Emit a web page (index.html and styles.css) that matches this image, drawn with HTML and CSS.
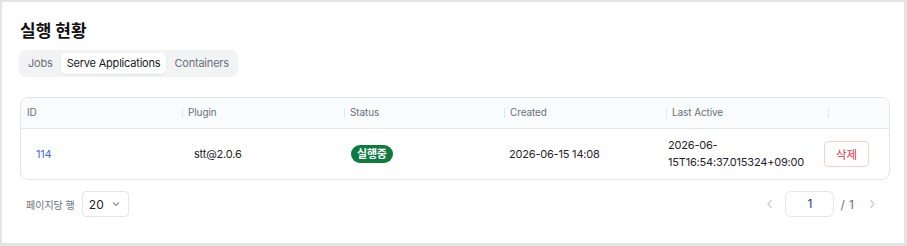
FILE: index.html
```html
<!DOCTYPE html>
<html lang="ko">
<head>
  <meta charset="UTF-8">
  <title>실행 현황</title>
  <link rel="stylesheet" href="styles.css">
</head>
<body>
  <div class="panel">
    <h2>실행 현황</h2>
    <div class="tabs">
      <span class="tab">Jobs</span>
      <span class="tab activo">Serve Applications</span>
      <span class="tab">Containers</span>
    </div>

    <div class="tabla-wrap">
      <table class="tabla">
        <colgroup>
          <col style="width:161px">
          <col style="width:162px">
          <col style="width:160px">
          <col style="width:162px">
          <col style="width:162px">
          <col>
        </colgroup>
        <thead>
          <tr>
            <th>ID</th>
            <th>Plugin</th>
            <th>Status</th>
            <th>Created</th>
            <th>Last Active</th>
            <th></th>
          </tr>
        </thead>
        <tbody>
          <tr>
            <td class="col-id"><a href="#">114</a></td>
            <td class="col-plugin">stt@2.0.6</td>
            <td><span class="badge">실행중</span></td>
            <td class="col-fecha">2026-06-15 14:08</td>
            <td class="col-activo">2026-06-<br>15T16:54:37.015324+09:00</td>
            <td><button type="button" class="btn-borrar">삭제</button></td>
          </tr>
        </tbody>
      </table>
    </div>

    <div class="pie">
      <div class="por-pagina">
        <span>페이지당 행</span>
        <div class="select">
          20
          <svg width="10" height="10" viewBox="0 0 10 10"><path d="M2 3.5 L5 6.5 L8 3.5" fill="none" stroke="#8a9099" stroke-width="1.1"/></svg>
        </div>
      </div>
      <div class="paginacion">
        <svg class="flecha" width="10" height="12" viewBox="0 0 10 12"><path d="M6.5 2 L3 6 L6.5 10" fill="none" stroke="#c8ccd3" stroke-width="1.2"/></svg>
        <div class="pagina">1</div>
        <span class="total">/&nbsp;1</span>
        <svg class="flecha" width="10" height="12" viewBox="0 0 10 12"><path d="M3.5 2 L7 6 L3.5 10" fill="none" stroke="#c8ccd3" stroke-width="1.2"/></svg>
      </div>
    </div>
  </div>
</body>
</html>
```

FILE: styles.css
```css
body {
  margin: 0;
  background: #e4e4e4;
  font-family: Inter, "Noto Sans CJK KR", sans-serif;
  color: #1f2328;
}
.panel {
  background: white;
  margin: 2px 3px 0 2px;
  height: 241px;
  box-sizing: border-box;
  padding: 17px 17px 0 18px;
}
h2 {
  margin: 0 0 7px 0;
  font-size: 17px;
  line-height: 24px;
  font-weight: 700;
  color: #111;
}
.tabs {
  display: inline-flex;
  gap: 2px;
  background: #f2f3f5;
  border-radius: 7px;
  padding: 3px;
  margin-left: -1px;
}
.tab {
  font-size: 11px;
  letter-spacing: -0.2px;
  line-height: 21px;
  padding: 0 6px;
  color: #6b7078;
  border-radius: 5px;
}
.tab.activo {
  background: white;
  color: #16191d;
  box-shadow: 0 1px 2px rgba(0,0,0,0.08);
}
.tabla-wrap {
  margin-top: 20px;
  width: 870px;
  border: 1px solid #e3e6eb;
  border-radius: 8px;
  overflow: hidden;
  box-sizing: border-box;
}
.tabla {
  width: 100%;
  border-collapse: collapse;
  table-layout: fixed;
}
.tabla th {
  background: #fafbfc;
  height: 28px;
  padding: 0 6px 2px 6px;
  text-align: left;
  font-size: 10px;
  letter-spacing: -0.1px;
  font-weight: 400;
  color: #6b7078;
  border-bottom: 1px solid #e3e6eb;
  position: relative;
}
.tabla th + th::before {
  content: "";
  position: absolute;
  left: 0;
  top: 10px;
  height: 10px;
  border-left: 1px solid #e3e6eb;
}
.tabla td {
  height: 50px;
  padding: 0 6px;
  font-size: 11px;
  letter-spacing: -0.2px;
  color: #1f2328;
}
.col-id a {
  color: #3f6ee8;
  text-decoration: none;
  padding-left: 9px;
}
.col-plugin {
  padding-left: 12px !important;
}
.col-fecha {
  padding-left: 5px !important;
}
.col-activo {
  padding-left: 2px !important;
  line-height: 17px;
}
.badge {
  display: inline-block;
  background: #0d7a3e;
  color: white;
  font-size: 11px;
  font-weight: 700;
  line-height: 18px;
  padding: 0 6px;
  border-radius: 9px;
  margin-left: 1px;
}
.btn-borrar {
  background: white;
  border: 1px solid #f7cfcf;
  color: #d9363e;
  border-radius: 4px;
  font-family: inherit;
  font-size: 11.5px;
  height: 26px;
  padding: 0 11px;
  margin-left: -10px;
}
.pie {
  display: flex;
  justify-content: space-between;
  align-items: center;
  margin-top: 11px;
  width: 870px;
}
.por-pagina {
  display: flex;
  align-items: center;
  gap: 7px;
  padding-left: 6px;
  font-size: 10px;
  color: #6b7078;
}
.select {
  display: flex;
  align-items: center;
  gap: 7px;
  height: 26px;
  box-sizing: border-box;
  border: 1px solid #e3e6eb;
  border-radius: 4px;
  padding: 0 7px 0 6px;
  font-size: 12px;
  color: #1f2328;
}
.paginacion {
  display: flex;
  align-items: center;
  gap: 8px;
  padding-right: 13px;
}
.pagina {
  width: 49px;
  height: 26px;
  box-sizing: border-box;
  border: 1px solid #e3e6eb;
  border-radius: 6px;
  text-align: center;
  line-height: 24px;
  font-size: 12px;
  color: #2b3a67;
  margin-left: 2px;
}
.total {
  font-size: 12px;
  color: #6b7078;
  word-spacing: 1px;
  margin-left: -2px;
  margin-right: 5px;
}
```
